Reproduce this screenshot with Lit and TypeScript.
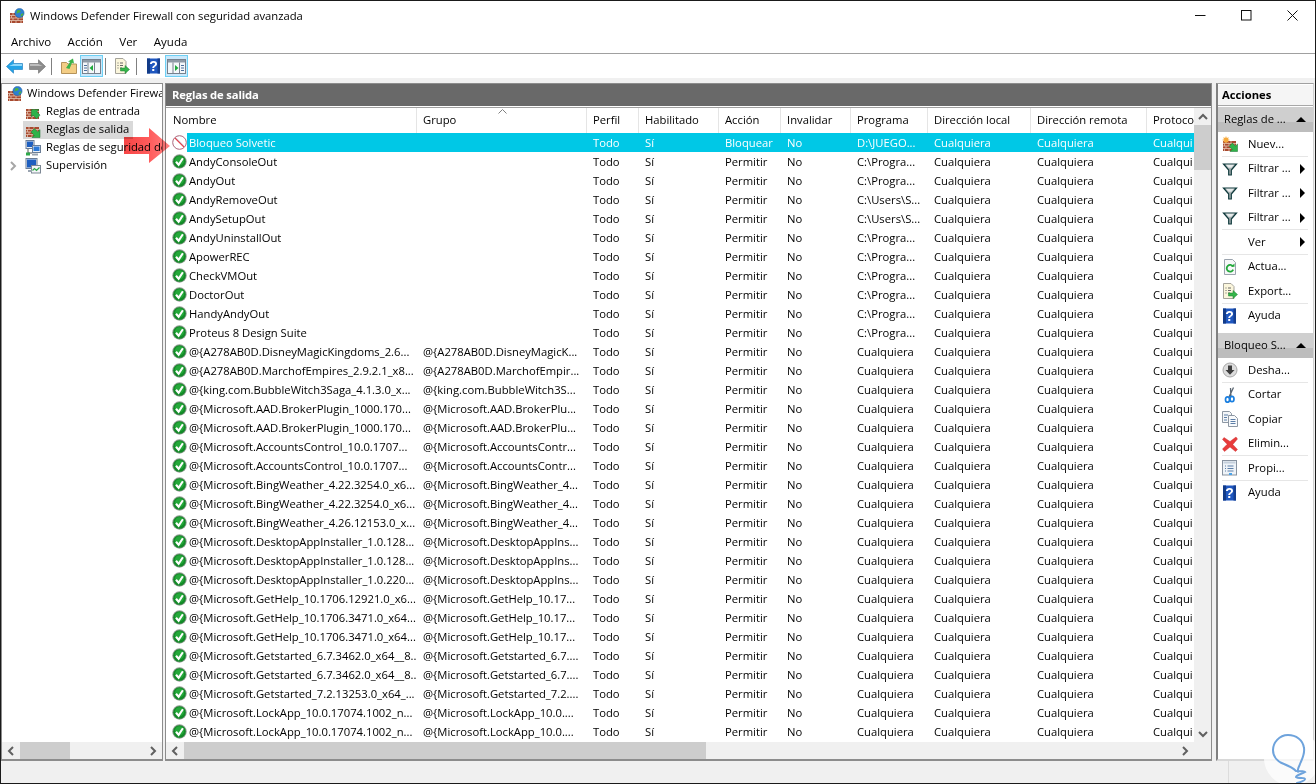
import { LitElement, html, css, svg } from "lit";
import { customElement } from "lit/decorators.js";

const wall = () => svg`
  <rect x="1" y="5" width="13" height="10" fill="#a8492f"/>
  <path d="M1 7.500h13M1 10h13M1 12.500h13" stroke="#e3c3b0" stroke-width=".8"/>
  <path d="M4 5v2.500M9 5v2.500M2.500 7.500V10M7 7.500V10M12 7.500V10M4 10v2.500M9 10v2.500M2.500 12.500V15M7 12.500V15M12 12.500V15" stroke="#e3c3b0" stroke-width=".8"/>`;
const logoIcon = html`<svg class="i16" viewBox="0 0 16 16">${wall()}
  <circle cx="10.500" cy="5" r="4.600" fill="#2d7fd3" stroke="#1f5c9e" stroke-width=".5"/>
  <path d="M8 2.500c1.500-1 3-.5 3.500.5s-1 1.500-2 1.700-2 1-2 2zM12 6c1-.5 2-.5 2.500-.5-.2 1.500-1.500 3-3 3.200z" fill="#4fb33d"/></svg>`;
const inArrow = html`<svg class="i16" viewBox="0 0 16 16">${wall()}
  <path d="M6.500 4h7.500l-2.200 2.200 3.200 3.400-3.400 3.900-3.400-3.800-1.700 1.700z" transform="translate(0 1.500)" fill="#2fb34a" stroke="#14712b" stroke-width=".5"/></svg>`;
const outArrow = html`<svg class="i16" viewBox="0 0 16 16">${wall()}
  <path d="M15 15.500H7l2.200-2.200-3.200-3.300 3.400-3.400 3.300 3.300 2.300-2.300z" fill="#2fb34a" stroke="#14712b" stroke-width=".5"/></svg>`;
const newRule = html`<svg class="i16" viewBox="0 0 16 16">${wall()}
  <path d="M4 0l.8 2 2-.8-.8 2 2 .8-2 .8.800 2-2-.8-.8 2-.8-2-2 .8.800-2-2-.8 2-.8-.8-2 2 .8z" fill="#f6a93b"/>
  <path d="M15.500 15.500H8l2.200-2.200-3-3 3.200-3.200 3 3 2.100-2.100z" fill="#2fb34a" stroke="#14712b" stroke-width=".5"/></svg>`;
const secRules = html`<svg class="i16" viewBox="0 0 16 16">
  <rect x="1" y="0.500" width="8" height="8" fill="#e8eef6" stroke="#6a7d96"/><rect x="2" y="1.500" width="6" height="5.500" fill="#1e5fc0"/>
  <rect x="7.500" y="5.500" width="8" height="7" fill="#e8eef6" stroke="#6a7d96"/><rect x="8.500" y="6.500" width="6" height="4.500" fill="#2a78d8"/>
  <path d="M3 9v4h4" fill="none" stroke="#555"/><rect x="1" y="12.500" width="4" height="3" fill="#2fa84a"/><rect x="7" y="13.500" width="6" height="2" fill="#9aa4b0"/></svg>`;
const monitor = html`<svg class="i16" viewBox="0 0 16 16">
  <rect x="1" y="0.500" width="11" height="10" fill="#e8eef6" stroke="#6a7d96"/><rect x="2" y="1.500" width="9" height="8" fill="#1e5fc0"/>
  <rect x="6.500" y="7.500" width="9" height="7.500" fill="#f4f6f8" stroke="#7c8794"/><path d="M7.500 12.500l2-2 2 2 3-3" fill="none" stroke="#2fa84a" stroke-width="1.200"/>
  <rect x="3" y="12" width="4" height="2" fill="#9aa4b0"/></svg>`;
const okIcon = html`<svg class="i15" viewBox="0 0 15 15"><circle cx="7.500" cy="7.500" r="7.200" fill="#8f9a90"/><circle cx="7.500" cy="7.500" r="6.300" fill="#138a28"/><circle cx="7.500" cy="6.800" r="4.600" fill="#25a83a"/>
  <path d="M4 7.800l2.600 3 4.300-6.600" fill="none" stroke="#fff" stroke-width="2.100"/></svg>`;
const blockIcon = html`<svg class="i15" viewBox="0 0 15 15"><circle cx="7.500" cy="7.500" r="6.800" fill="#fff" stroke="#a9657a" stroke-width="1"/>
  <path d="M3 3l9 9" stroke="#e4404c" stroke-width="1.300"/><path d="M3.800 2.600l8.600 8.600" stroke="#9fb2c6" stroke-width=".5"/></svg>`;
const funnel = html`<svg class="i16" viewBox="0 0 16 16"><path d="M1.500 3h13L9.300 9v5H6.700V9z" fill="#a9b2b3" stroke="#0f3a3c" stroke-width="1.200"/><path d="M4 3.800h8L9.500 6.800h-3z" fill="#e6ebeb"/></svg>`;
const help = html`<svg class="i16" viewBox="0 0 16 16"><rect x="1" y="0.500" width="13" height="15" fill="#1f57c0"/><rect x="1" y="0.500" width="3" height="15" fill="#123b88"/><rect x="11.500" y="0.500" width="2.500" height="15" fill="#153f90"/>
  <text x="7.500" y="13" text-anchor="middle" class="q">?</text></svg>`;
const refresh = html`<svg class="i16" viewBox="0 0 16 16"><path d="M2.500 .5h8l3 3v12h-11z" fill="#f6f7f8" stroke="#9aa3ad"/><path d="M11 7.500a3.400 3.400 0 1 0 .2 3.200" fill="none" stroke="#22a83a" stroke-width="1.800"/><path d="M9 7.800h3.500V4.500z" fill="#22a83a"/></svg>`;
const exportI = html`<svg class="i16" viewBox="0 0 16 16"><path d="M1.500 .5h7.500l3 3v12H1.500z" fill="#fbf6dc" stroke="#a5a39a"/><path d="M3.500 5h1M6 5h3M3.500 7.500h1M6 7.500h3M3.500 10h1M6 10h2" stroke="#666"/><path d="M6.500 10h4.500V7.500l4.500 4-4.500 4V13H6.500z" fill="#35b54a" stroke="#1d7f31" stroke-width=".5"/></svg>`;
const disable = html`<svg class="i16" viewBox="0 0 16 16"><circle cx="8" cy="8" r="7" fill="#dcdcdc" stroke="#a8a8a8"/><path d="M6 3.500h4V8h2.500L8 12.800 3.500 8H6z" fill="#3d3d3d"/></svg>`;
const cut = html`<svg class="i16" viewBox="0 0 16 16"><path d="M11.500 .5L7 10M8.500 1l.5 9" stroke="#5a6570" stroke-width="1.300" fill="none"/><ellipse cx="5.500" cy="12.500" rx="2" ry="2.700" fill="none" stroke="#1a7fe0" stroke-width="1.700"/><ellipse cx="10" cy="12" rx="2" ry="2.700" fill="none" stroke="#1a7fe0" stroke-width="1.700"/></svg>`;
const copy = html`<svg class="i16" viewBox="0 0 16 16"><path d="M.5 .5h7l2 2v9h-9z" fill="#f4f6f8" stroke="#8d97a3"/><path d="M6.500 4.500h6l3 3v8h-9z" fill="#f8fafc" stroke="#8d97a3"/><path d="M2 4h4M2 6.500h3M2 9h3M8.500 8.500h5M8.500 10.500h5M8.500 12.500h5" stroke="#5c7ea8"/></svg>`;
const del = html`<svg class="i16" viewBox="0 0 16 16"><path d="M2 1.500L8 5.500 14 1 15.500 3 10.800 8.500 15.500 13.500 13.500 15.500 8 11 2.500 15.500 .5 13 5.200 8.300 .5 3.500z" fill="#e83b3b" stroke="#c52a2a" stroke-width=".4"/></svg>`;
const props = html`<svg class="i16" viewBox="0 0 16 16"><rect x=".5" y=".5" width="14" height="14.500" fill="#eef3f8" stroke="#8792a0"/><rect x="1.500" y="1.500" width="12" height="2" fill="#c4cfdb"/><path d="M3 6h1M5.500 6h6M3 8.500h1M5.500 8.500h6M3 11h1M5.500 11h6" stroke="#5c7ea8"/><rect x="7" y="13" width="3" height="2" fill="#4aa3e8"/></svg>`;

const back = html`<svg class="tb16" viewBox="0 0 17 15"><path d="M.5 7.500L7.500 .8v3.700h9v6h-9v3.700z" fill="#23a3e6" stroke="#1d78b8" stroke-width=".6"/><path d="M7.500 5h8.500v2H3z" fill="#8ed7fa"/></svg>`;
const fwd = html`<svg class="tb16" viewBox="0 0 17 15"><path d="M16.500 7.500L9.500 .8v3.700h-9v6h9v3.700z" fill="#8c8c8c" stroke="#6a6a6a" stroke-width=".6"/><path d="M1 5h8.500l4 2H1z" fill="#bdbdbd"/></svg>`;
const folderUp = html`<svg class="i16" viewBox="0 0 16 16"><path d="M.5 4.500h5l1.500 1.500h8.500v9.500H.5z" fill="#f3cd85" stroke="#b5935a"/><path d="M5 10l4-6-2-.5L12 .5 13 5.500 11 4.800 8.500 11z" fill="#3cb34a"/></svg>`;
const paneL = html`<svg class="tb20" viewBox="0 0 19 15"><rect x=".5" y=".5" width="18" height="14" fill="#f4f7fa" stroke="#77818d"/><rect x="1" y="1" width="17" height="2.500" fill="#8f9aa6"/><path d="M6 3.500v11M12.500 3.500v11" stroke="#77818d"/><path d="M2 6.500h3M2 9h3M2 11.500h3" stroke="#4d6f9c"/><path d="M11 6l-3.500 3 3.500 3z" fill="#1eaa3c"/></svg>`;
const paneR = html`<svg class="tb20" viewBox="0 0 19 15"><rect x=".5" y=".5" width="18" height="14" fill="#f4f7fa" stroke="#77818d"/><rect x="1" y="1" width="17" height="2.500" fill="#8f9aa6"/><path d="M6 3.500v11M12.500 3.500v11" stroke="#77818d"/><path d="M14 6.500h3M14 9h3M14 11.500h3" stroke="#4d6f9c"/><path d="M8 6l3.500 3-3.500 3z" fill="#1eaa3c"/></svg>`;

const chev = (d: string) => {
  const p: Record<string, string> = { l: "M6 1L2 5l4 4", r: "M2 1l4 4-4 4", u: "M1 6l4-4 4 4", d: "M1 2l4 4 4-4" };
  const cls = d === "l" || d === "r" ? "c8" : "c10";
  const vb = d === "l" || d === "r" ? "0 0 8 10" : "0 0 10 8";
  return html`<svg class=${cls} viewBox=${vb}><path d=${p[d]} fill="none" stroke="#606060" stroke-width="2"/></svg>`;
};

type R = [string, string, string];
const P = "C:\\Progra...", U = "C:\\Users\\S...", C = "Cualquiera";
const A = "@{A278AB0D.", M = "@{Microsoft.";
const rows: R[] = [
  ["AndyConsoleOut", "", P], ["AndyOut", "", P], ["AndyRemoveOut", "", U], ["AndySetupOut", "", U],
  ["AndyUninstallOut", "", P], ["ApowerREC", "", P], ["CheckVMOut", "", P], ["DoctorOut", "", P],
  ["HandyAndyOut", "", P], ["Proteus 8 Design Suite", "", P],
  [A + "DisneyMagicKingdoms_2.6...", A + "DisneyMagicK...", C],
  [A + "MarchofEmpires_2.9.2.1_x8...", A + "MarchofEmpir...", C],
  ["@{king.com.BubbleWitch3Saga_4.1.3.0_x...", "@{king.com.BubbleWitch3S...", C],
  [M + "AAD.BrokerPlugin_1000.170...", M + "AAD.BrokerPlu...", C],
  [M + "AAD.BrokerPlugin_1000.170...", M + "AAD.BrokerPlu...", C],
  [M + "AccountsControl_10.0.1707...", M + "AccountsContr...", C],
  [M + "AccountsControl_10.0.1707...", M + "AccountsContr...", C],
  [M + "BingWeather_4.22.3254.0_x6...", M + "BingWeather_4...", C],
  [M + "BingWeather_4.22.3254.0_x6...", M + "BingWeather_4...", C],
  [M + "BingWeather_4.26.12153.0_x...", M + "BingWeather_4...", C],
  [M + "DesktopAppInstaller_1.0.128...", M + "DesktopAppIns...", C],
  [M + "DesktopAppInstaller_1.0.128...", M + "DesktopAppIns...", C],
  [M + "DesktopAppInstaller_1.0.220...", M + "DesktopAppIns...", C],
  [M + "GetHelp_10.1706.12921.0_x6...", M + "GetHelp_10.17...", C],
  [M + "GetHelp_10.1706.3471.0_x64...", M + "GetHelp_10.17...", C],
  [M + "GetHelp_10.1706.3471.0_x64...", M + "GetHelp_10.17...", C],
  [M + "Getstarted_6.7.3462.0_x64__8...", M + "Getstarted_6.7....", C],
  [M + "Getstarted_6.7.3462.0_x64__8...", M + "Getstarted_6.7....", C],
  [M + "Getstarted_7.2.13253.0_x64_...", M + "Getstarted_7.2....", C],
  [M + "LockApp_10.0.17074.1002_n...", M + "LockApp_10.0....", C],
  [M + "LockApp_10.0.17074.1002_n...", M + "LockApp_10.0....", C],
];
const cols = ["Nombre", "Grupo", "Perfil", "Habilitado", "Acción", "Invalidar", "Programa", "Dirección local", "Dirección remota", "Protocolo"];

type Act = { i?: unknown; t: string; more?: boolean; line?: boolean };
const g1: Act[] = [
  { i: newRule, t: "Nuev...", line: true },
  { i: funnel, t: "Filtrar ...", more: true },
  { i: funnel, t: "Filtrar ...", more: true },
  { i: funnel, t: "Filtrar ...", more: true, line: true },
  { t: "Ver", more: true, line: true },
  { i: refresh, t: "Actua..." },
  { i: exportI, t: "Export...", line: true },
  { i: help, t: "Ayuda" },
];
const g2: Act[] = [
  { i: disable, t: "Desha...", line: true },
  { i: cut, t: "Cortar" },
  { i: copy, t: "Copiar" },
  { i: del, t: "Elimin...", line: true },
  { i: props, t: "Propi...", line: true },
  { i: help, t: "Ayuda" },
];

@customElement("app-root")
export class AppRoot extends LitElement {
  static styles = css`
    :host { display: block; width: 1316px; height: 784px; font: 11.25px "Open Sans", sans-serif; color: #000; }
    * { box-sizing: border-box; }
    .win { position: relative; width: 1316px; height: 784px; border: 1px solid #1a1a1a; background: #f0f0f0; display: flex; flex-direction: column; overflow: hidden; }
    .i16 { width: 16px; height: 16px; flex: none; display: block; }
    .i15 { width: 15px; height: 15px; flex: none; display: block; }
    .q { font: 700 14px "Liberation Sans", sans-serif; fill: #fff; }
    .tb16 { width: 17px; height: 15px; display: block; }
    .tb20 { width: 19px; height: 15px; display: block; }
    .c8 { width: 8px; height: 10px; display: block; }
    .c10 { width: 10px; height: 8px; display: block; }

    .title { height: 30px; background: #fff; display: flex; align-items: center; padding: 0 0 0 8px; flex: none; }
    .title .tx { flex: 1; padding: 0 0 2px 5px; }
    .wc { width: 46px; height: 30px; display: flex; align-items: center; justify-content: center; margin-top: -2px; }
    .wc svg { width: 11px; height: 11px; display: block; }
    .menu { height: 23px; background: #fff; border-bottom: 1px solid #a0a0a0; display: flex; align-items: center; padding: 0 0 2px 10px; gap: 16.5px; flex: none; font-size: 11.5px; }
    .tools { height: 24px; background: #fff; display: flex; align-items: center; padding-left: 5px; flex: none; }
    .tools .sep { width: 1px; height: 17px; background: #808080; flex: none; }
    .on { width: 23px; height: 22px; background: #c9e8fb; border: 1px solid #6ed0f4; display: flex; align-items: center; justify-content: center; flex: none; }
    .g { flex: none; display: block; }

    .main { flex: 1; min-height: 0; display: flex; padding: 5px 2px 0 0; align-items: stretch; }
    .left { width: 162px; flex: none; background: #fff; border: 1px solid #8c8c8c; border-bottom-width: 2px; display: flex; flex-direction: column; }
    .tree { flex: 1; min-height: 0; overflow: hidden; padding-top: 1px; }
    .tn { height: 18px; display: flex; align-items: center; white-space: nowrap; }
    .tn.root { padding-left: 5px; gap: 4px; }
    .tn.root span { padding-bottom: 4px; flex: none; }
    .tn.kid { padding-left: 23px; }
    .tn .ic { width: 18px; flex: none; }
    .tn .lb { padding: 0 0 4px 3px; flex: none; }
    .tn.sel { background: linear-gradient(#d9d9d9, #d9d9d9) 21px 0 / 110px 100% no-repeat; }
    .tn.exp { position: relative; }
    .exp .c8 { position: absolute; left: 7px; top: 4px; }
    .exp .c8 path { stroke: #a6a6a6; }

    .hs { height: 17px; flex: none; background: #f0f0f0; display: flex; align-items: center; }
    .hs .ar { width: 18px; display: flex; justify-content: center; flex: none; }
    .hs .th { background: #cdcdcd; height: 100%; flex: none; }
    .hs .sp { flex: 1; }

    .center { width: 1047px; margin-left: 2px; flex: none; background: #fff; border: 1px solid #8c8c8c; border-bottom-width: 2px; display: flex; flex-direction: column; }
    .head { height: 22px; flex: none; background: #696969; color: #fff; font-weight: 700; letter-spacing: -.15px; padding: 0 0 1px 6px; display: flex; align-items: center; }
    .hr { height: 1px; background: #a0a0a0; flex: none; margin-top: 1px; }
    .lst { flex: 1; min-height: 0; display: flex; }
    .tbl { flex: 1; min-width: 0; overflow: hidden; display: flex; flex-direction: column; }
    .sv { width: 17px; flex: none; background: #f0f0f0; display: flex; flex-direction: column; }
    .sv .ar { height: 17px; display: flex; justify-content: center; align-items: center; flex: none; }
    .sv .th { height: 45px; background: #cdcdcd; flex: none; }
    .sv .sp { flex: 1; }
    .grid { display: grid; grid-template-columns: 250px 170px 52px 80px 62px 70px 77px 103px 116px 48px; }
    .hd { height: 25px; flex: none; position: relative; }
    .hd div { padding: 0 0 3px 7px; display: flex; align-items: center; box-shadow: 1px 0 0 #e5e5e5; overflow: hidden; white-space: nowrap; }
    .hd div:last-of-type { box-shadow: none; }
    .caret { position: absolute; left: 332px; top: 1px; width: 9px; height: 5px; display: block; }
    .rows { flex: 1; min-height: 0; overflow: hidden; }
    .rw { height: 19px; }
    .rw .c { padding-left: 7px; white-space: nowrap; overflow: hidden; line-height: 19px; }
    .rw .n { padding-left: 6px; display: flex; align-items: center; line-height: 19px; overflow: hidden; white-space: nowrap; }
    .rw .n span { flex: 1; padding-left: 2px; height: 19px; }
    .rw.sel .c, .rw.sel .n span { background: #00c8e6; color: #fff; }

    .right { width: 98px; flex: none; margin-left: 4px; border-left: 2px solid #808080; background: #fff; border-top: 1px solid #a0a0a0; border-right: 1px solid #d0d0d0; border-bottom: 2px solid #d8d8d8; display: flex; flex-direction: column; }
    .ah { height: 21px; padding: 0 0 1px 4px; display: flex; align-items: center; font-weight: 700; flex: none; background: #f5f5f5; border-bottom: 1px solid #a8a8a8; margin-top: 1px; }
    .gh { height: 25px; flex: none; display: flex; align-items: center; justify-content: space-between; padding: 0 7px 0 6px; background: linear-gradient(#cfcfcf 0 60%, #bdbdbd 60% 100%); margin-top: 1px; }
    .gh span { padding-bottom: 2px; }
    .gh.two { margin-top: 5px; }
    .gh i { width: 0; height: 0; border: 5px solid transparent; border-top: 0; border-bottom: 5px solid #000; display: block; }
    .ac { height: 24.5px; display: flex; align-items: center; padding-left: 4px; position: relative; flex: none; }
    .ac.ln::after { content: ""; position: absolute; left: 4px; right: 5px; bottom: 0; height: 1px; background: #e6e6e6; }
    .ac .ico { width: 26px; flex: none; }
    .ac b { font-weight: 400; flex: 1; padding-bottom: 2px; }
    .ac i { width: 0; height: 0; border: 5px solid transparent; border-right: 0; border-left: 5px solid #000; display: block; margin-right: 8px; }

    .status { height: 22px; flex: none; display: flex; justify-content: flex-end; }
    .status div { width: 87px; border-left: 1px solid #dcdcdc; }

    .arrow { position: absolute; left: 123px; top: 127px; width: 47px; height: 36px; display: block; mix-blend-mode: multiply; }
    .logo { position: absolute; left: 1255px; top: 725px; width: 60px; height: 58px; display: block; }
  `;

  render() {
    const act = (a: Act) => html`<div class="ac ${a.line ? "ln" : ""}"><span class="ico">${a.i ?? ""}</span><b>${a.t}</b>${a.more ? html`<i></i>` : ""}</div>`;
    const gap = (w: number) => html`<span class="g" style="width:${w}px"></span>`;
    return html`<div class="win">
      <div class="title">${logoIcon}<span class="tx">Windows Defender Firewall con seguridad avanzada</span>
        <div class="wc"><svg viewBox="0 0 11 11"><path d="M0 5.500h10.500" stroke="#111"/></svg></div>
        <div class="wc"><svg viewBox="0 0 11 11"><rect x=".5" y=".5" width="9.500" height="9.500" fill="none" stroke="#111"/></svg></div>
        <div class="wc"><svg viewBox="0 0 11 11"><path d="M.5 .5l10 10M10.500 .5l-10 10" stroke="#111"/></svg></div>
      </div>
      <div class="menu"><span>Archivo</span><span>Acción</span><span>Ver</span><span>Ayuda</span></div>
      <div class="tools">
        ${back}${gap(6)}${fwd}${gap(5)}<span class="sep"></span>${gap(9)}
        ${folderUp}${gap(3)}<span class="on">${paneL}</span>${gap(2)}<span class="sep"></span>${gap(8)}
        ${exportI}${gap(6)}<span class="sep"></span>${gap(9)}
        ${help}${gap(3)}<span class="on">${paneR}</span>
      </div>
      <div class="main">
        <div class="left">
          <div class="tree">
            <div class="tn root">${logoIcon}<span>Windows Defender Firewall</span></div>
            <div class="tn kid"><span class="ic">${inArrow}</span><span class="lb">Reglas de entrada</span></div>
            <div class="tn kid sel"><span class="ic">${outArrow}</span><span class="lb">Reglas de salida</span></div>
            <div class="tn kid"><span class="ic">${secRules}</span><span class="lb">Reglas de seguridad de conexión</span></div>
            <div class="tn kid exp">${chev("r")}<span class="ic">${monitor}</span><span class="lb">Supervisión</span></div>
          </div>
          <div class="hs"><span class="ar">${chev("l")}</span><span class="th" style="width:50px"></span><span class="sp"></span><span class="ar">${chev("r")}</span></div>
        </div>
        <div class="center">
          <div class="head">Reglas de salida</div>
          <div class="hr"></div>
          <div class="lst">
            <div class="tbl">
              <div class="hd grid">${cols.map((c) => html`<div>${c}</div>`)}
                <svg class="caret" viewBox="0 0 9 5"><path d="M.5 4.500l4-4 4 4" fill="none" stroke="#808080"/></svg>
              </div>
              <div class="rows">
                <div class="rw grid sel"><div class="n">${blockIcon}<span>Bloqueo Solvetic</span></div><div class="c"></div><div class="c">Todo</div><div class="c">Sí</div><div class="c">Bloquear</div><div class="c">No</div><div class="c">D:\\JUEGO...</div><div class="c">Cualquiera</div><div class="c">Cualquiera</div><div class="c">Cualqui</div></div>
                ${rows.map((r) => html`<div class="rw grid"><div class="n">${okIcon}<span>${r[0]}</span></div><div class="c">${r[1]}</div><div class="c">Todo</div><div class="c">Sí</div><div class="c">Permitir</div><div class="c">No</div><div class="c">${r[2]}</div><div class="c">Cualquiera</div><div class="c">Cualquiera</div><div class="c">Cualqui</div></div>`)}
              </div>
            </div>
            <div class="sv"><span class="ar">${chev("u")}</span><span class="th"></span><span class="sp"></span><span class="ar">${chev("d")}</span></div>
          </div>
          <div class="hs"><span class="ar">${chev("l")}</span><span class="th" style="width:522px"></span><span class="sp"></span><span class="ar">${chev("r")}</span><span style="width:17px"></span></div>
        </div>
        <div class="right">
          <div class="ah">Acciones</div>
          <div class="gh"><span>Reglas de ...</span><i></i></div>
          ${g1.map(act)}
          <div class="gh two"><span>Bloqueo S...</span><i></i></div>
          ${g2.map(act)}
        </div>
      </div>
      <div class="status"><div></div></div>
      <svg class="arrow" viewBox="0 0 47 36"><defs><linearGradient id="ag"><stop offset="0" stop-color="#f64444"/><stop offset=".55" stop-color="#ff5c5c"/><stop offset="1" stop-color="#ff8080"/></linearGradient></defs>
        <path d="M0 9h25V0l21 18-21 17V26H0z" fill="url(#ag)"/></svg>
      <svg class="logo" viewBox="1255 725 60 58"><circle cx="1291" cy="757" r="28" fill="#fff" fill-opacity=".75"/>
        <path d="M1297 771c-1-3 1-5 2-8 2-5 5-10 4-16-1-8-8-13-16-13-9 0-15 8-15 15 0 7 5 12 11 14 5 2 9 4 12 7 4 0 8 0 9 1-3 2-9 3-9 5 2 2 9 0 9 2 0 2-4 3-8 4" fill="none" stroke="#6ea3dc" stroke-width="2" stroke-linecap="round"/></svg>
    </div>`;
  }
}
